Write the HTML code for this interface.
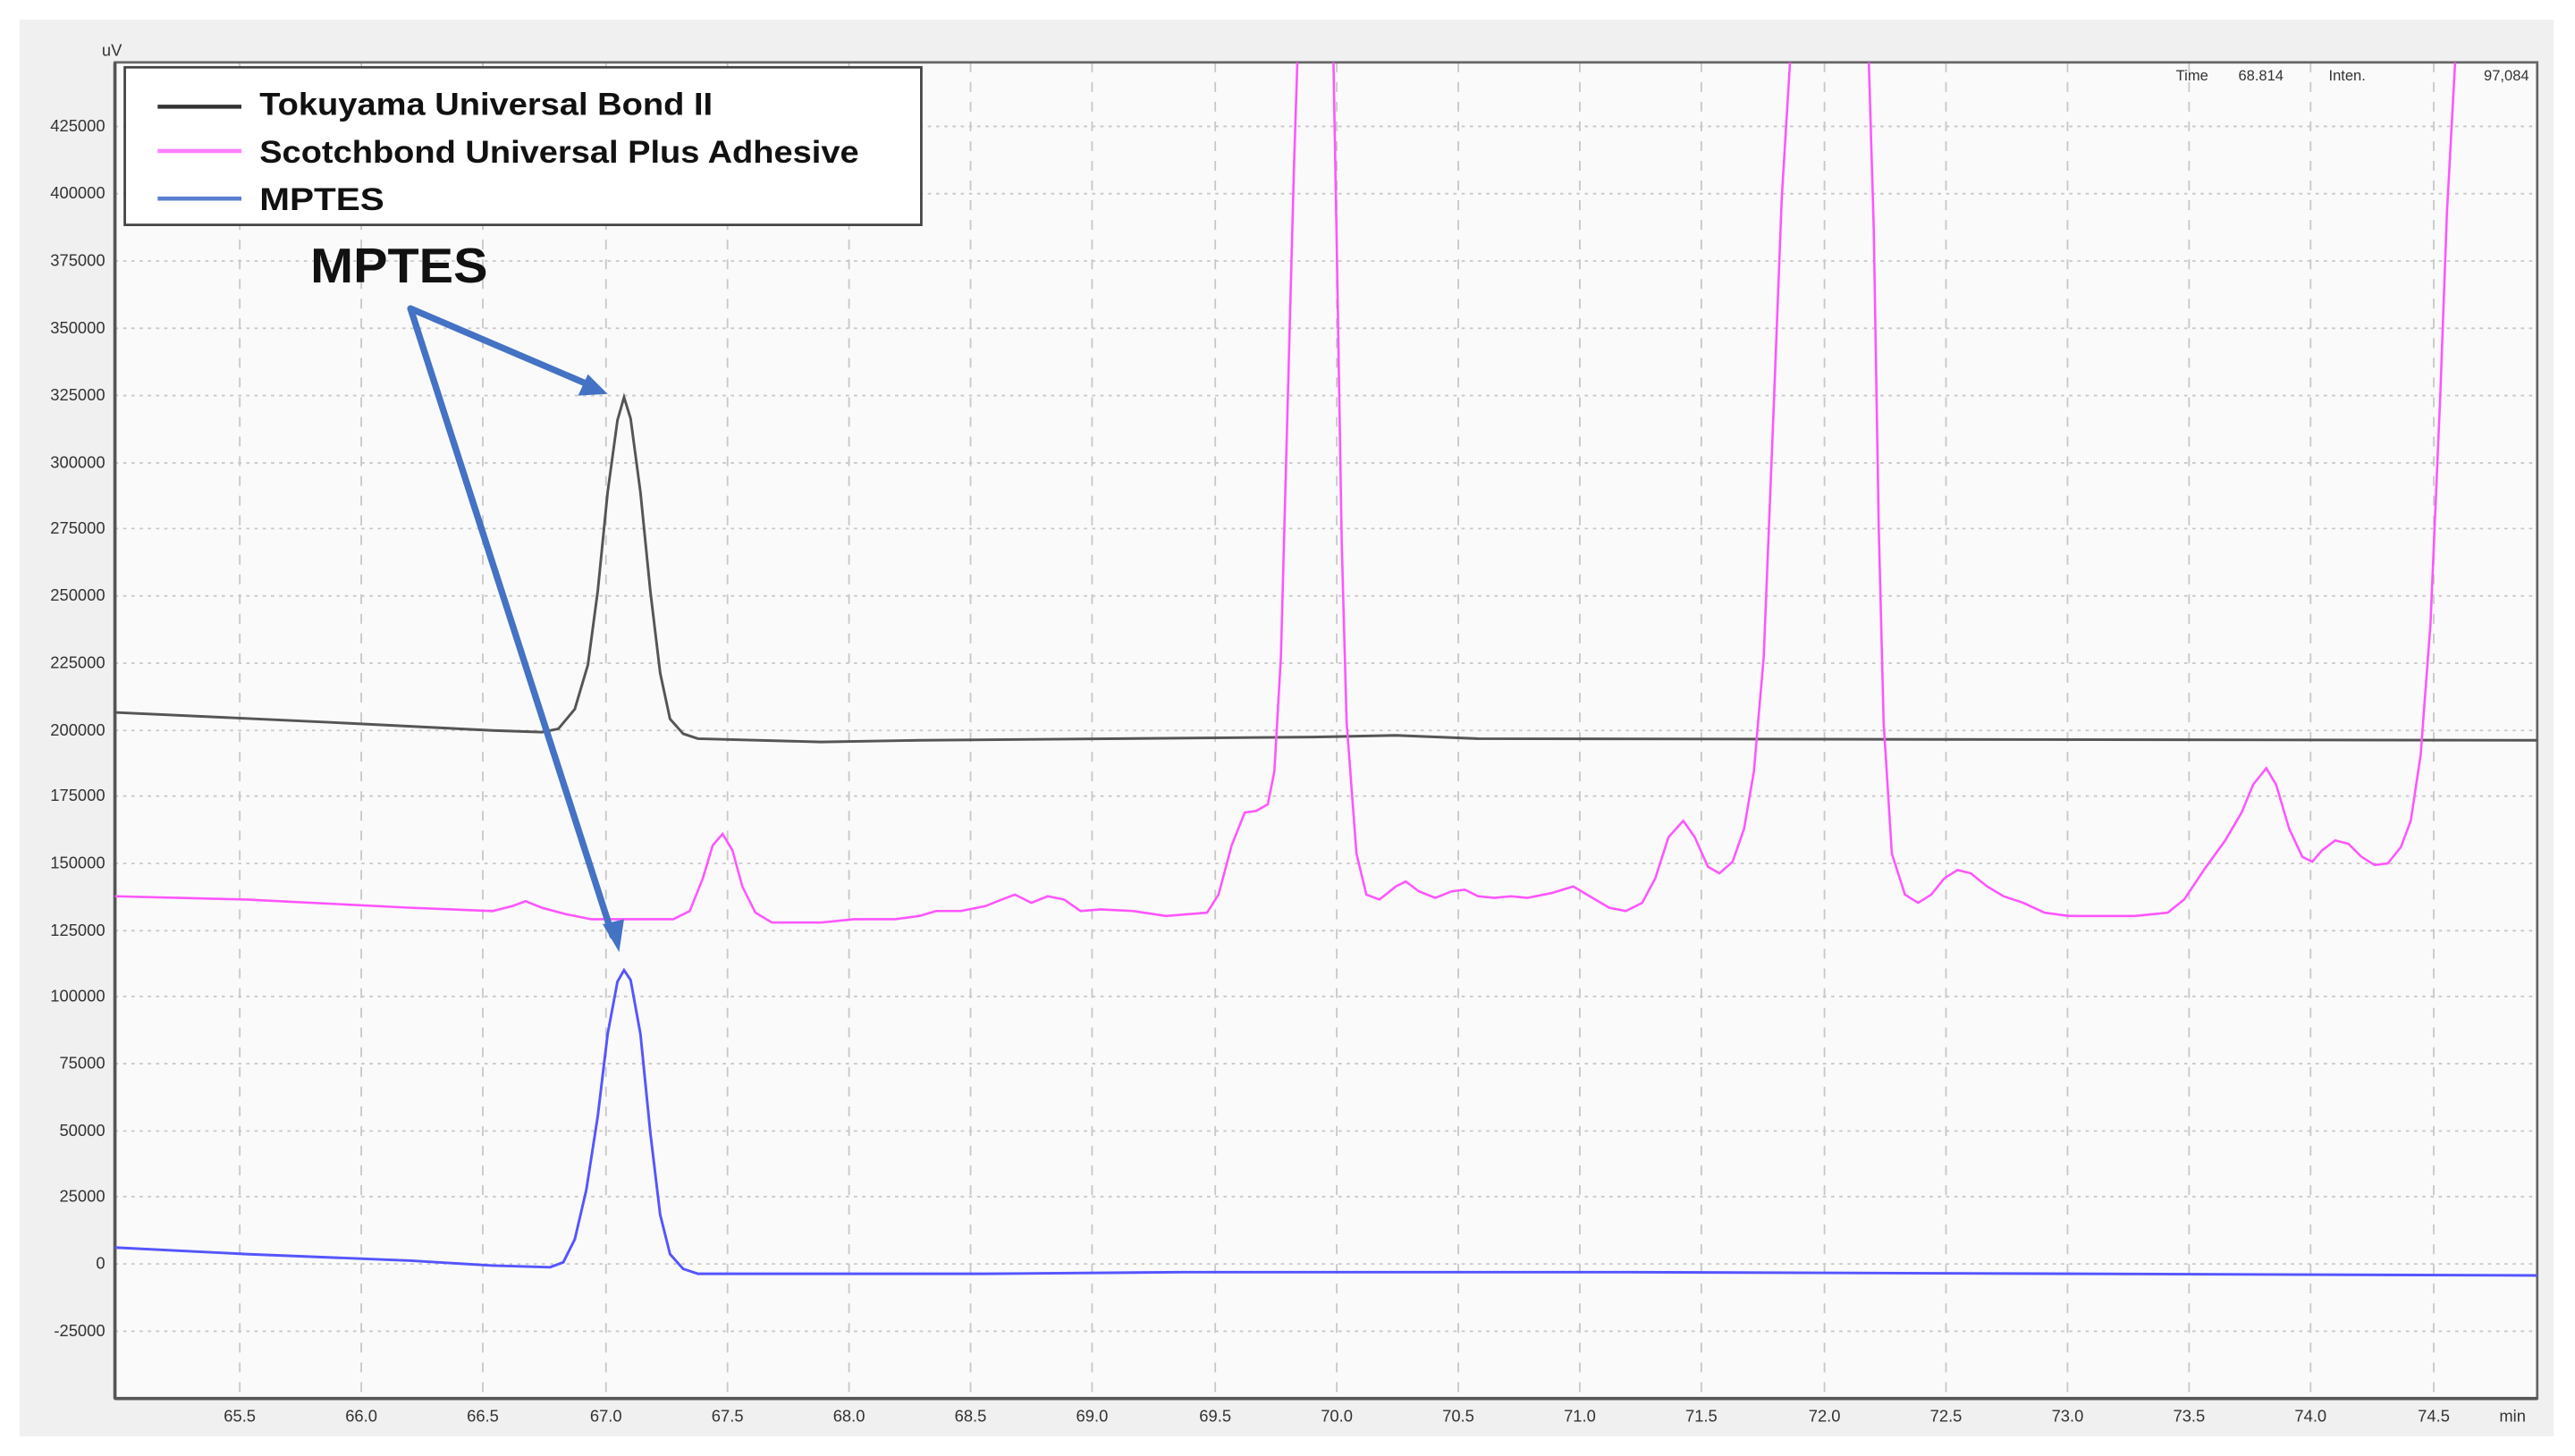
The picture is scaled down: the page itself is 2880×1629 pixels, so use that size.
<!DOCTYPE html>
<html><head><meta charset="utf-8"><style>
html,body{margin:0;padding:0;background:#fff;width:2880px;height:1629px;overflow:hidden}
svg{display:block}
text{font-family:"Liberation Sans",sans-serif}
</style></head><body>
<svg width="2880" height="1629" viewBox="0 0 1568 887" preserveAspectRatio="none">
<rect x="12" y="12" width="1543" height="863" fill="#f0f0f0"/>
<rect x="70" y="38" width="1475" height="814" fill="#fafafa"/>
<g stroke="#c8c8c8" stroke-width="1" stroke-dasharray="2,3">
<line x1="70" x2="1545" y1="77" y2="77"/><line x1="70" x2="1545" y1="118" y2="118"/><line x1="70" x2="1545" y1="159" y2="159"/><line x1="70" x2="1545" y1="200" y2="200"/><line x1="70" x2="1545" y1="241" y2="241"/><line x1="70" x2="1545" y1="282" y2="282"/><line x1="70" x2="1545" y1="322" y2="322"/><line x1="70" x2="1545" y1="363" y2="363"/><line x1="70" x2="1545" y1="404" y2="404"/><line x1="70" x2="1545" y1="445" y2="445"/><line x1="70" x2="1545" y1="485" y2="485"/><line x1="70" x2="1545" y1="526" y2="526"/><line x1="70" x2="1545" y1="567" y2="567"/><line x1="70" x2="1545" y1="607" y2="607"/><line x1="70" x2="1545" y1="648" y2="648"/><line x1="70" x2="1545" y1="689" y2="689"/><line x1="70" x2="1545" y1="729" y2="729"/><line x1="70" x2="1545" y1="770" y2="770"/><line x1="70" x2="1545" y1="811" y2="811"/>
</g>
<g stroke="#c8c8c8" stroke-width="1" stroke-dasharray="6,6">
<line y1="38" y2="852" x1="146" x2="146"/><line y1="38" y2="852" x1="220" x2="220"/><line y1="38" y2="852" x1="294" x2="294"/><line y1="38" y2="852" x1="369" x2="369"/><line y1="38" y2="852" x1="443" x2="443"/><line y1="38" y2="852" x1="517" x2="517"/><line y1="38" y2="852" x1="591" x2="591"/><line y1="38" y2="852" x1="665" x2="665"/><line y1="38" y2="852" x1="740" x2="740"/><line y1="38" y2="852" x1="814" x2="814"/><line y1="38" y2="852" x1="888" x2="888"/><line y1="38" y2="852" x1="962" x2="962"/><line y1="38" y2="852" x1="1036" x2="1036"/><line y1="38" y2="852" x1="1111" x2="1111"/><line y1="38" y2="852" x1="1185" x2="1185"/><line y1="38" y2="852" x1="1259" x2="1259"/><line y1="38" y2="852" x1="1333" x2="1333"/><line y1="38" y2="852" x1="1407" x2="1407"/><line y1="38" y2="852" x1="1482" x2="1482"/>
</g>
<rect x="70" y="38" width="1475" height="814" fill="none" stroke="#666" stroke-width="1.5"/>
<line x1="70" x2="1545" y1="852" y2="852" stroke="#555" stroke-width="2"/>
<line x1="70" x2="70" y1="38" y2="852" stroke="#555" stroke-width="2"/>
<g font-size="10" fill="#333" text-anchor="end">
<text x="64" y="80">425000</text><text x="64" y="121">400000</text><text x="64" y="162">375000</text><text x="64" y="203">350000</text><text x="64" y="244">325000</text><text x="64" y="285">300000</text><text x="64" y="325">275000</text><text x="64" y="366">250000</text><text x="64" y="407">225000</text><text x="64" y="448">200000</text><text x="64" y="488">175000</text><text x="64" y="529">150000</text><text x="64" y="570">125000</text><text x="64" y="610">100000</text><text x="64" y="651">75000</text><text x="64" y="692">50000</text><text x="64" y="732">25000</text><text x="64" y="773">0</text><text x="64" y="814">-25000</text>
</g>
<text x="62" y="34" font-size="10" fill="#333">uV</text>
<g font-size="10" fill="#333" text-anchor="middle">
<text x="146" y="866">65.5</text><text x="220" y="866">66.0</text><text x="294" y="866">66.5</text><text x="369" y="866">67.0</text><text x="443" y="866">67.5</text><text x="517" y="866">68.0</text><text x="591" y="866">68.5</text><text x="665" y="866">69.0</text><text x="740" y="866">69.5</text><text x="814" y="866">70.0</text><text x="888" y="866">70.5</text><text x="962" y="866">71.0</text><text x="1036" y="866">71.5</text><text x="1111" y="866">72.0</text><text x="1185" y="866">72.5</text><text x="1259" y="866">73.0</text><text x="1333" y="866">73.5</text><text x="1407" y="866">74.0</text><text x="1482" y="866">74.5</text><text x="1530" y="866">min</text>
</g>
<g font-size="9" fill="#333"><text x="1325" y="49">Time</text><text x="1363" y="49">68.814</text><text x="1418" y="49">Inten.</text><text x="1540" y="49" text-anchor="end">97,084</text></g>
<polyline fill="none" stroke="#555" stroke-width="1.6" points="70,434 200,440 300,445 330,446 340,444 350,432 358,405 364,360 370,300 376,256 380,242 384,255 390,300 396,360 402,410 408,438 416,447 425,450 500,452 560,451 800,449 850,448 900,450 1545,451"/>
<path fill="none" stroke="#ff55ff" stroke-width="1.4" d="M70,546 150,548 250,553 300,555 312,552 320,549 330,553 345,557 360,560 410,560 420,555 428,535 434,515 440,508 446,518 452,540 460,556 470,562 500,562 520,560 545,560 560,558 570,555 585,555 600,552 610,548 618,545 628,550 638,546 648,548 658,555 670,554 690,555 710,558 735,556 742,545 750,515 758,495 765,494 772,490 776,470 780,400 784,250 788,100 790,38 M812,38 814,150 817,330 820,440 826,520 832,545 840,548 850,540 856,537 864,543 874,547 884,543 892,542 900,546 910,547 920,546 930,547 945,544 958,540 968,546 980,553 990,555 1000,550 1008,535 1016,510 1025,500 1032,510 1040,528 1047,532 1055,525 1062,505 1068,470 1074,400 1080,250 1085,120 1090,38 M1138,38 1141,140 1144,320 1147,440 1152,520 1160,545 1168,550 1176,545 1184,535 1192,530 1200,532 1210,540 1220,546 1232,550 1245,556 1260,558 1300,558 1320,556 1330,548 1342,530 1355,512 1365,495 1372,478 1380,468 1386,478 1394,505 1402,522 1408,525 1414,518 1422,512 1430,514 1438,522 1446,527 1454,526 1462,516 1468,500 1474,460 1480,380 1486,240 1490,130 1495,38"/>
<polyline fill="none" stroke="#5555ff" stroke-width="1.6" points="70,760 150,764 250,768 300,771 335,772 343,769 350,755 357,725 364,680 370,630 376,598 380,591 384,597 390,630 396,690 402,740 408,764 416,773 425,776 600,776 720,775 990,775 1545,777"/>
<rect x="76" y="41" width="485" height="96" fill="#fff" stroke="#444" stroke-width="1.5"/>
<line x1="96" x2="147" y1="65" y2="65" stroke="#333" stroke-width="2.5"/>
<line x1="96" x2="147" y1="92" y2="92" stroke="#ff80ff" stroke-width="2.5"/>
<line x1="96" x2="147" y1="121" y2="121" stroke="#5b7fd0" stroke-width="2.5"/>
<g font-size="19" font-weight="bold" fill="#111">
<text x="158" y="70" textLength="276" lengthAdjust="spacingAndGlyphs">Tokuyama Universal Bond II</text>
<text x="158" y="99" textLength="365" lengthAdjust="spacingAndGlyphs">Scotchbond Universal Plus Adhesive</text>
<text x="158" y="128" textLength="76" lengthAdjust="spacingAndGlyphs">MPTES</text>
</g>
<text x="189" y="172" font-size="30" font-weight="bold" fill="#111" textLength="108" lengthAdjust="spacingAndGlyphs">MPTES</text>
<g stroke="#4472c4" stroke-width="4" fill="none" stroke-linecap="round">
<line x1="250" y1="188" x2="360" y2="235"/>
<line x1="250" y1="188" x2="373" y2="570"/>
</g>
<g fill="#4472c4">
<polygon points="370,240 352,241 358,228"/>
<polygon points="377,580 367,563 380,560"/>
</g>
</svg>
</body></html>
